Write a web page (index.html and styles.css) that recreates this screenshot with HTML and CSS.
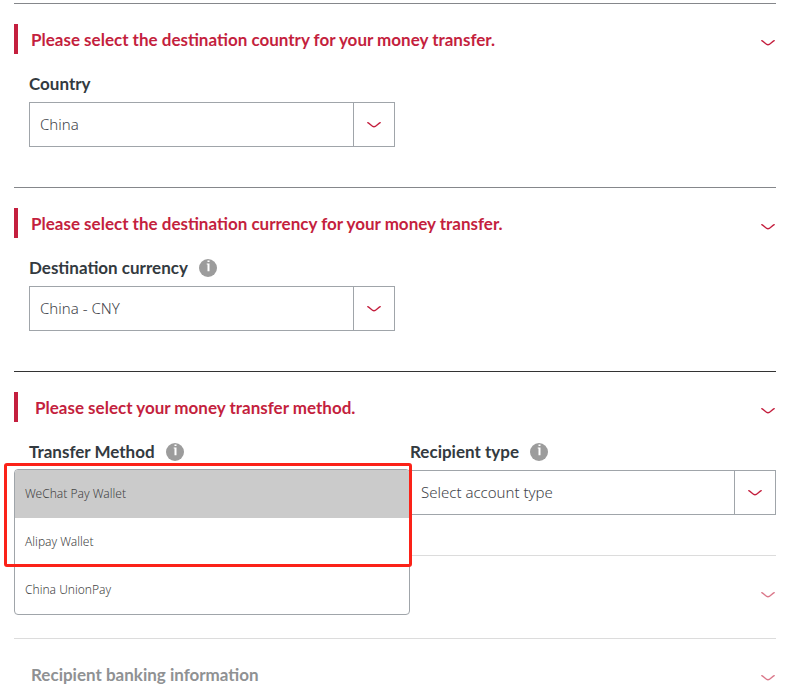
FILE: index.html
```html
<!DOCTYPE html>
<html lang="en">
<head>
<meta charset="utf-8">
<meta name="viewport" content="width=device-width, initial-scale=1">
<title>Money transfer</title>
<link rel="stylesheet" href="styles.css">
</head>
<body>
<svg class="defs" aria-hidden="true">
  <symbol id="chevron" viewBox="0 0 14 6"><path d="M.8 .7C3 1.700 5.200 4.700 7 4.700S11 1.700 13.200 .7" fill="none" stroke="currentColor" stroke-width="1.400" stroke-linecap="round"/></symbol>
  <symbol id="info" viewBox="0 0 18 18"><circle cx="9" cy="9" r="9" fill="#9c9c9c"/><path d="M8.500 1.500h2v1.600h-2zM7.700 4.600h2.800v7.600h-2V5.400h-.8z" fill="#fff"/></symbol>
</svg>
<main class="form">
  <section class="section">
    <h2 class="heading">
      <button class="toggle" type="button"><span class="title">Please select the destination country for your money transfer.</span><svg class="chevron"><use href="#chevron"/></svg></button>
    </h2>
    <div class="fields">
      <div class="field">
        <div class="label-row"><label for="country">Country</label></div>
        <div class="control">
          <select id="country"><option>China</option></select>
          <span class="arrow"><svg class="chevron"><use href="#chevron"/></svg></span>
        </div>
      </div>
    </div>
  </section>

  <section class="section">
    <h2 class="heading">
      <button class="toggle" type="button"><span class="title">Please select the destination currency for your money transfer.</span><svg class="chevron"><use href="#chevron"/></svg></button>
    </h2>
    <div class="fields">
      <div class="field">
        <div class="label-row"><label for="currency">Destination currency</label><button class="info" type="button" aria-label="About destination currency"><svg><use href="#info"/></svg></button></div>
        <div class="control">
          <select id="currency"><option>China - CNY</option></select>
          <span class="arrow"><svg class="chevron"><use href="#chevron"/></svg></span>
        </div>
      </div>
    </div>
  </section>

  <section class="section section-active">
    <h2 class="heading">
      <button class="toggle" type="button"><span class="title">Please select your money transfer method.</span><svg class="chevron"><use href="#chevron"/></svg></button>
    </h2>
    <div class="fields">
      <div class="field">
        <div class="label-row"><label for="method">Transfer Method</label><button class="info" type="button" aria-label="About transfer method"><svg><use href="#info"/></svg></button></div>
        <div class="control">
          <button class="combo" id="method" type="button" aria-haspopup="listbox" aria-expanded="true"></button>
          <ul class="menu" role="listbox" aria-label="Transfer Method">
            <li class="option option-selected" role="option" aria-selected="true">WeChat Pay Wallet</li>
            <li class="option" role="option">Alipay Wallet</li>
            <li class="option" role="option">China UnionPay</li>
          </ul>
          <div class="highlight"></div>
        </div>
      </div>
      <div class="field">
        <div class="label-row"><label for="recipient">Recipient type</label><button class="info" type="button" aria-label="About recipient type"><svg><use href="#info"/></svg></button></div>
        <div class="control">
          <select id="recipient"><option>Select account type</option></select>
          <span class="arrow"><svg class="chevron"><use href="#chevron"/></svg></span>
        </div>
      </div>
    </div>
  </section>

  <section class="section section-disabled">
    <h2 class="heading">
      <button class="toggle" type="button" disabled aria-label="Next step"><span class="title"></span><svg class="chevron"><use href="#chevron"/></svg></button>
    </h2>
  </section>

  <section class="section section-disabled">
    <h2 class="heading">
      <button class="toggle" type="button" disabled><span class="title">Recipient banking information</span><svg class="chevron"><use href="#chevron"/></svg></button>
    </h2>
  </section>
</main>
</body>
</html>
```
FILE: styles.css
```css
* { box-sizing: border-box; }

body {
  margin: 0;
  background: #fff;
  color: #333a40;
  font-family: Lato, "Noto Sans", sans-serif;
}

button, select { font: inherit; color: inherit; }

.defs { position: absolute; width: 0; height: 0; }

.form { padding: 3px 23px 0 14px; }

.section {
  padding: 20px 0 40px;
  border-top: 1px solid #85878b;
}

.section-active { border-top-color: #333; }

.section-disabled {
  padding-bottom: 32px;
  border-top-color: #dcdcdc;
}

.section:last-child { padding-bottom: 0; }

.heading {
  margin: 0;
  border-left: 4px solid #c41f3e;
  font-size: 17px;
  line-height: 30px;
}

.toggle {
  display: flex;
  align-items: center;
  justify-content: space-between;
  width: 100%;
  height: 30px;
  padding: 2px 1px 0 13px;
  border: 0;
  background: none;
  color: #c41f3e;
  font-weight: 700;
  text-align: left;
}

.section-active .toggle { padding-left: 17px; }

.section-disabled .heading { border-left-color: transparent; }
.section-disabled .title { color: #8f9193; }
.section-disabled .chevron { opacity: 0.6; }

.chevron {
  display: block;
  width: 14px;
  height: 6px;
  color: #c41f3e;
}

.toggle .chevron { margin-top: 5px; }

.fields {
  display: grid;
  grid-template-columns: 1fr 1fr;
  gap: 15px;
  padding: 18px 0 0 15px;
}

.label-row {
  display: flex;
  align-items: center;
  gap: 11px;
  height: 24px;
  margin-bottom: 6px;
  font-size: 17px;
  font-weight: 700;
  line-height: 24px;
}

.info {
  width: 18px;
  height: 18px;
  padding: 0;
  border: 0;
  background: none;
}

.info svg { display: block; width: 18px; height: 18px; }

.control {
  position: relative;
  display: flex;
  height: 45px;
  border: 1px solid #a0a5aa;
  font-family: "Noto Sans", "Open Sans", sans-serif;
}

.control select {
  appearance: none;
  flex: 1;
  min-width: 0;
  padding: 0 10px 2px;
  border: 0;
  background: none;
  color: #3f444a;
  font-size: 15px;
  font-weight: 300;
}

.arrow {
  display: flex;
  align-items: center;
  justify-content: center;
  width: 41px;
  border-left: 1px solid #a0a5aa;
  pointer-events: none;
}

.combo { flex: 1; border: 0; background: none; }

.menu {
  position: absolute;
  z-index: 1;
  top: -2px;
  left: -16px;
  right: -16px;
  margin: 0;
  padding: 0;
  overflow: hidden;
  border: 1px solid #a0a5aa;
  border-radius: 4px;
  background: #fff;
  list-style: none;
}

.option {
  padding: 0 10px;
  color: #444;
  font-size: 12px;
  font-weight: 300;
  line-height: 48px;
}

.option-selected { background: #cbcbcb; }

.highlight {
  position: absolute;
  z-index: 2;
  top: -8px;
  left: -26px;
  right: -18px;
  height: 104px;
  border: 3px solid #fb2218;
  border-radius: 3px;
  pointer-events: none;
}
```
